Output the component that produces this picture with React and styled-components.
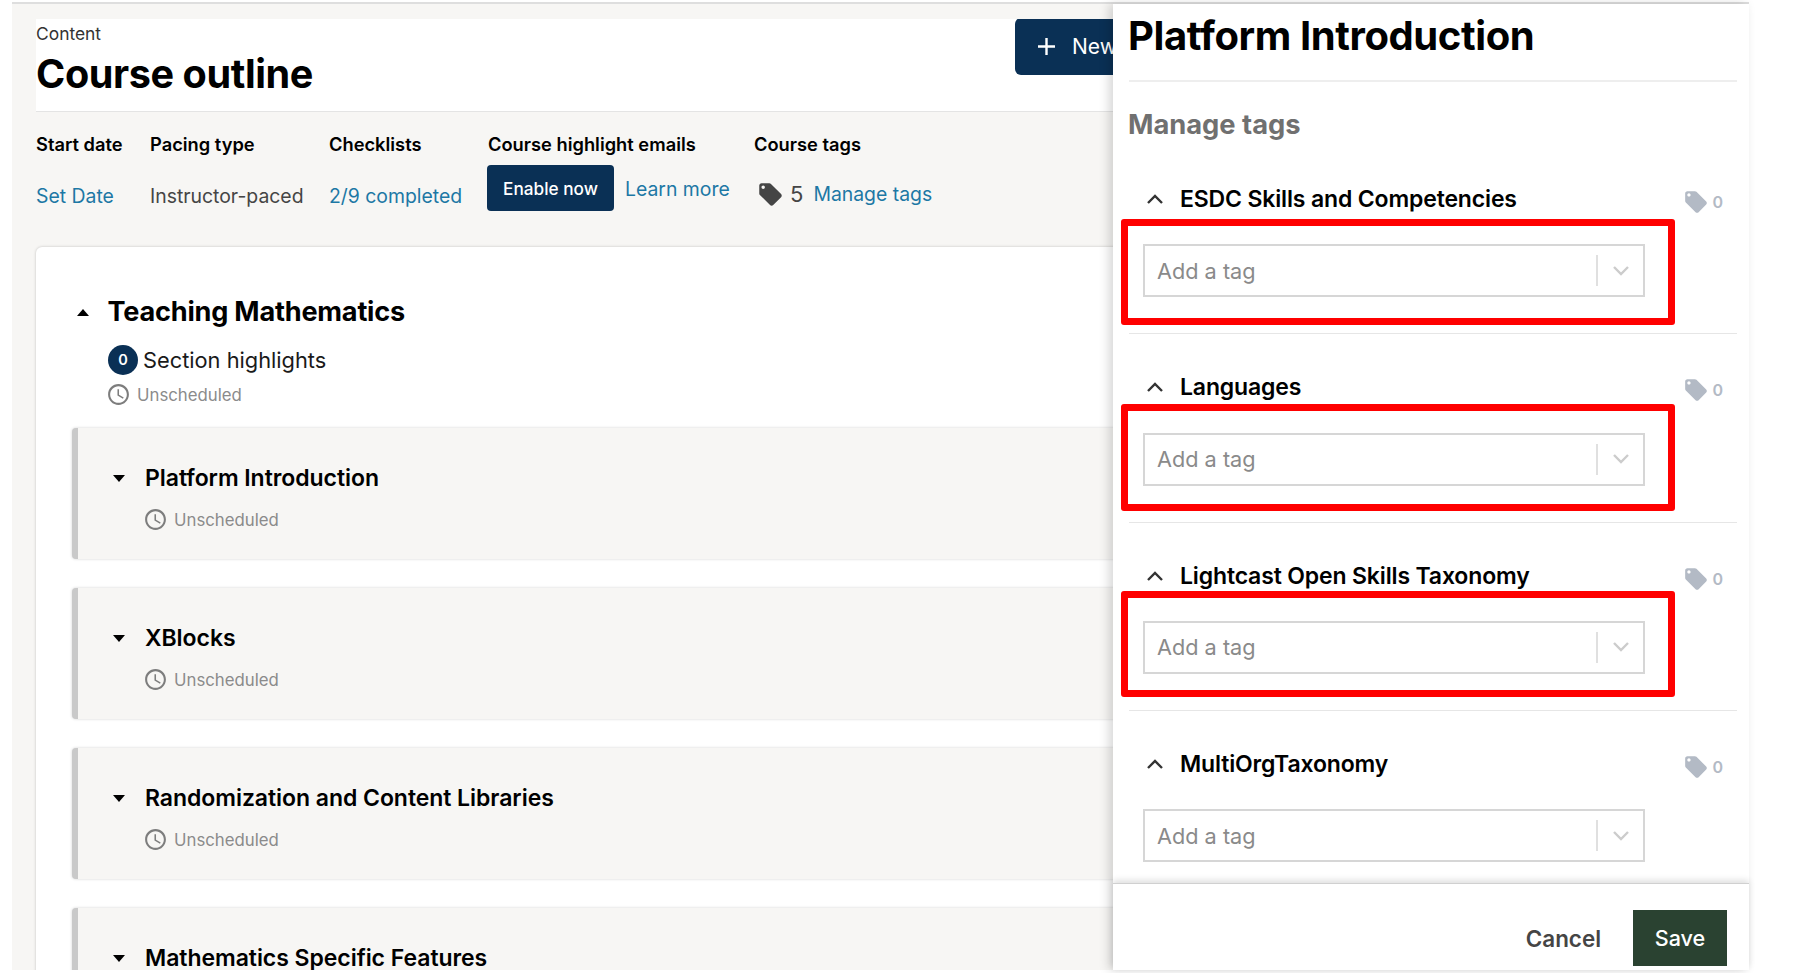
import React from 'react'
import styled, { createGlobalStyle } from 'styled-components'

const GlobalStyle = createGlobalStyle`
html, body {
  margin: 0;
  padding: 0;
  background: #fff;
  font-family: Inter, "Liberation Sans", sans-serif;
}
* { box-sizing: border-box; }
`

const Page = styled.div`
width: 1797px;
height: 973px;
padding: 2px 48px 3px 12px;
overflow: hidden;
background: #fff;
`

const Screen = styled.div`
display: flex;
height: 968px;
border-top: 2px solid #dedede;
background: #f7f6f4;
`

const Main = styled.main`
width: 1101px;
flex-shrink: 0;
padding: 15px 0 0 24px;
overflow: hidden;
`

const PageHeader = styled.header`
display: flex;
height: 93px;
width: 1077px;
background: #fff;
border-bottom: 1px solid #e4e4e4;
overflow: hidden;
`

const HeaderText = styled.div`
flex: 0 0 979px;
`

const Eyebrow = styled.div`
font-size: 17.4px;
line-height: 22px;
margin-top: 4px;
color: #333;
`

const PageTitle = styled.h1`
margin: 5px 0 0;
font-size: 39.6px;
line-height: 48px;
font-weight: 700;
letter-spacing: -0.4px;
color: #000;
`

const NewButton = styled.div`
display: flex;
align-items: center;
gap: 15px;
flex-shrink: 0;
height: 57px;
margin-top: -1px;
padding-left: 21px;
width: 190px;
background: #0a3055;
border-radius: 6px;
color: #fff;
font-size: 21px;
white-space: nowrap;
`

const MetaRow = styled.div`
display: flex;
margin-top: 20px;
`

const MetaColumn = styled.div`
flex: 0 0 ${(p) => p.$width}px;
`

const MetaLabel = styled.div`
font-size: 18.3px;
line-height: 24px;
font-weight: 600;
color: #000;
white-space: nowrap;
`

const MetaValue = styled.div`
display: flex;
align-items: center;
height: 46px;
margin-top: 9px;
padding-top: ${(p) => p.$offset || 0}px;
font-size: 19.4px;
color: #454545;
white-space: nowrap;
`

const TextLink = styled.span`
color: #1d78a5;
margin-top: ${(p) => p.$top || 0}px;
margin-left: ${(p) => p.$left || 0}px;
`

const DarkButton = styled.div`
display: flex;
align-items: center;
justify-content: center;
width: 127px;
height: 46px;
margin-left: -1px;
background: #0a3055;
border-radius: 4px;
color: #fff;
font-size: 17.2px;
font-weight: 500;
`

const TagCount = styled.span`
font-size: 22px;
margin: 0 10px 0 6px;
color: #454545;
`

const TagSlot = styled.span`
display: flex;
margin-left: 3px;
`

const OutlineCard = styled.section`
width: 1200px;
margin-top: 36px;
padding: 48px 0 0 36px;
background: #fff;
border-radius: 6px 0 0 0;
box-shadow: 0 0 3px rgba(0, 0, 0, 0.22);
min-height: 800px;
`

const SectionTitleRow = styled.div`
display: flex;
align-items: center;
gap: 18.5px;
margin-left: 5px;
`

const Caret = styled.span`
flex-shrink: 0;
width: 0;
height: 0;
border-left: ${(p) => p.$size}px solid transparent;
border-right: ${(p) => p.$size}px solid transparent;
${(p) => (p.$up ? 'border-bottom' : 'border-top')}: 7px solid #000;
`

const SectionTitle = styled.h2`
margin: 0;
font-size: 27.1px;
line-height: 34px;
font-weight: 700;
color: #000;
letter-spacing: -0.2px;
`

const SectionBody = styled.div`
margin-left: 36px;
`

const Highlights = styled.div`
display: flex;
align-items: center;
gap: 5px;
height: 31px;
margin-top: 15px;
font-size: 21.8px;
color: #1a1a1a;
`

const Badge = styled.span`
display: flex;
align-items: center;
justify-content: center;
width: 30px;
height: 30px;
border-radius: 50%;
background: #0a3055;
color: #fff;
font-size: 14.5px;
font-weight: 600;
`

const Schedule = styled.div`
display: flex;
align-items: center;
gap: 6px;
margin-top: ${(p) => p.$top}px;
margin-left: ${(p) => p.$left}px;
height: 25px;
font-size: 16.8px;
color: #8b8b8b;
`

const SubsectionList = styled.div`
display: flex;
flex-direction: column;
gap: 29px;
margin-top: 21px;
`

const Subsection = styled.article`
height: 131px;
padding: 38px 0 0 35px;
background: #f7f6f4;
border-left: 6px solid #c9c9c9;
border-radius: 4px;
box-shadow: 0 0 3px rgba(0, 0, 0, 0.18);
`

const SubsectionRow = styled.div`
display: flex;
align-items: center;
gap: 20px;
`

const SubsectionTitle = styled.h3`
margin: 0;
font-size: 23px;
line-height: 24px;
font-weight: 600;
color: #000;
letter-spacing: -0.05px;
white-space: nowrap;
`

const Panel = styled.aside`
display: flex;
flex-direction: column;
width: 636px;
flex-shrink: 0;
background: #fff;
box-shadow: -4px 0 10px rgba(0, 0, 0, 0.16);
position: relative;
`

const PanelBody = styled.div`
flex: 1;
min-height: 0;
padding: 8px 12px 0 16px;
overflow: hidden;
`

const PanelTitle = styled.h2`
margin: 0;
padding-bottom: 20px;
border-bottom: 2px solid #eeeeee;
font-size: 40px;
line-height: 48px;
font-weight: 700;
letter-spacing: -0.4px;
text-indent: -1px;
color: #000;
`

const PanelSubtitle = styled.h3`
margin: 25px 0 3px;
font-size: 27.3px;
line-height: 36px;
font-weight: 700;
text-indent: -1px;
color: #707070;
`

const TagSection = styled.section`
padding: 37px 0 36px;
border-bottom: 1px solid #e6e6e6;
&:last-child { border-bottom: none; }
`

const TagHeader = styled.div`
display: flex;
align-items: center;
height: 32px;
padding: 0 14px 0 18px;
`

const TagName = styled.h4`
flex: 1;
margin: 0 0 0 17px;
font-size: 23px;
line-height: 32px;
font-weight: 600;
color: #000;
letter-spacing: -0.15px;
`

const TagStat = styled.span`
display: flex;
align-items: center;
gap: 3px;
margin-top: 6px;
font-size: 16px;
font-weight: 600;
color: #b3bac5;
`

const Select = styled.div`
position: relative;
display: flex;
align-items: center;
width: 502px;
height: 53px;
margin: 29.3px 0 0 14px;
padding-left: 12px;
background: #fff;
border: 2px solid #d6d6d6;
font-size: 21.7px;
color: #8a8a8a;
`

const Placeholder = styled.span`
flex: 1;
`

const SelectDivider = styled.span`
width: 2px;
height: 31px;
background: #e0e0e0;
`

const SelectArrow = styled.span`
display: flex;
justify-content: center;
width: 45px;
`

const RedFrame = styled.span`
position: absolute;
top: ${(p) => p.$top}px;
bottom: ${(p) => p.$bottom}px;
left: -24px;
right: -32px;
border: 7px solid #ff0000;
border-radius: 3px;
pointer-events: none;
`

const PanelFooter = styled.footer`
display: flex;
justify-content: flex-end;
gap: 32px;
flex-shrink: 0;
height: 87px;
padding: 26px 22px 0 0;
background: #fff;
border-top: 1px solid #d0d0d0;
box-shadow: 0 -3px 6px rgba(0, 0, 0, 0.12);
position: relative;
`

const CancelButton = styled.div`
display: flex;
align-items: center;
height: 56px;
font-size: 22.4px;
font-weight: 600;
color: #454545;
`

const SaveButton = styled.div`
display: flex;
align-items: center;
justify-content: center;
width: 94px;
height: 56px;
background: #2a4231;
color: #fff;
font-size: 21.6px;
font-weight: 500;
`

const ClockIcon = ({ size = 25 }) => (
  <svg width={size} height={size} viewBox="0 0 24 24" fill="#7d7d7d">
    <path d="M11.99 2C6.47 2 2 6.48 2 12s4.47 10 9.99 10C17.52 22 22 17.52 22 12S17.52 2 11.99 2zM12 20c-4.42 0-8-3.58-8-8s3.58-8 8-8 8 3.58 8 8-3.58 8-8 8zm.5-13H11v6l5.25 3.15.75-1.23-4.5-2.67z" />
  </svg>
)

const TagIcon = ({ size, color }) => (
  <svg width={size} height={size} viewBox="0 0 24 24" fill={color}>
    <path d="M21.41 11.58l-9-9C12.05 2.22 11.55 2 11 2H4c-1.1 0-2 .9-2 2v7c0 .55.22 1.06.59 1.42l9 9c.36.36.86.58 1.41.58.55 0 1.05-.22 1.41-.59l7-7c.37-.36.59-.86.59-1.41 0-.55-.23-1.06-.59-1.42zM5.5 7C4.67 7 4 6.33 4 5.5S4.67 4 5.5 4 7 4.67 7 5.5 6.33 7 5.5 7z" />
  </svg>
)

const PlusIcon = () => (
  <svg width="21" height="21" viewBox="0 0 21 21" stroke="#fff" strokeWidth="2.4" fill="none">
    <path d="M10.5 2v17M2 10.5h17" />
  </svg>
)

const ChevronUp = () => (
  <svg width="16" height="10" viewBox="0 0 16 10" fill="none" stroke="#333" strokeWidth="2.4">
    <path d="M1 9l7-7 7 7" />
  </svg>
)

const ChevronDown = () => (
  <svg width="16" height="10" viewBox="0 0 16 10" fill="none" stroke="#cccccc" strokeWidth="2.4">
    <path d="M1 1l7 7 7-7" />
  </svg>
)

const subsections = [
  { title: 'Platform Introduction', scheduled: true },
  { title: 'XBlocks', scheduled: true },
  { title: 'Randomization and Content Libraries', scheduled: true },
  { title: 'Mathematics Specific Features', scheduled: false },
]

const taxonomies = [
  { name: 'ESDC Skills and Competencies', frame: { top: -27, bottom: -30 } },
  { name: 'Languages', frame: { top: -31, bottom: -27 } },
  { name: 'Lightcast Open Skills Taxonomy', frame: { top: -32, bottom: -25 } },
  { name: 'MultiOrgTaxonomy' },
]

const App = () => {
  return (
    <Page>
      <GlobalStyle />
      <Screen>
        <Main>
          <PageHeader>
            <HeaderText>
              <Eyebrow>Content</Eyebrow>
              <PageTitle>Course outline</PageTitle>
            </HeaderText>
            <NewButton>
              <PlusIcon />
              New
            </NewButton>
          </PageHeader>

          <MetaRow>
            <MetaColumn $width={114}>
              <MetaLabel>Start date</MetaLabel>
              <MetaValue $offset={16}>
                <TextLink>Set Date</TextLink>
              </MetaValue>
            </MetaColumn>
            <MetaColumn $width={179}>
              <MetaLabel>Pacing type</MetaLabel>
              <MetaValue $offset={16}>Instructor-paced</MetaValue>
            </MetaColumn>
            <MetaColumn $width={159}>
              <MetaLabel>Checklists</MetaLabel>
              <MetaValue $offset={16}>
                <TextLink>2/9 completed</TextLink>
              </MetaValue>
            </MetaColumn>
            <MetaColumn $width={266}>
              <MetaLabel>Course highlight emails</MetaLabel>
              <MetaValue>
                <DarkButton>Enable now</DarkButton>
                <TextLink $left={11} $top={1}>Learn more</TextLink>
              </MetaValue>
            </MetaColumn>
            <MetaColumn $width={260}>
              <MetaLabel>Course tags</MetaLabel>
              <MetaValue $offset={12}>
                <TagSlot>
                  <TagIcon size={27} color="#454545" />
                </TagSlot>
                <TagCount>5</TagCount>
                <TextLink>Manage tags</TextLink>
              </MetaValue>
            </MetaColumn>
          </MetaRow>

          <OutlineCard>
            <SectionTitleRow>
              <Caret $up $size={6} />
              <SectionTitle>Teaching Mathematics</SectionTitle>
            </SectionTitleRow>
            <SectionBody>
              <Highlights>
                <Badge>0</Badge>
                Section highlights
              </Highlights>
              <Schedule $top={7} $left={-2}>
                <ClockIcon />
                Unscheduled
              </Schedule>
            </SectionBody>
            <SubsectionList>
              {subsections.map((item) => (
                <Subsection key={item.title}>
                  <SubsectionRow>
                    <Caret $size={6.5} />
                    <SubsectionTitle>{item.title}</SubsectionTitle>
                  </SubsectionRow>
                  {item.scheduled && (
                    <Schedule $top={17} $left={30}>
                      <ClockIcon />
                      Unscheduled
                    </Schedule>
                  )}
                </Subsection>
              ))}
            </SubsectionList>
          </OutlineCard>
        </Main>

        <Panel>
          <PanelBody>
            <PanelTitle>Platform Introduction</PanelTitle>
            <PanelSubtitle>Manage tags</PanelSubtitle>
            {taxonomies.map((item) => (
              <TagSection key={item.name}>
                <TagHeader>
                  <ChevronUp />
                  <TagName>{item.name}</TagName>
                  <TagStat>
                    <TagIcon size={26} color="#b3bac5" />
                    0
                  </TagStat>
                </TagHeader>
                <Select>
                  <Placeholder>Add a tag</Placeholder>
                  <SelectDivider />
                  <SelectArrow>
                    <ChevronDown />
                  </SelectArrow>
                  {item.frame && <RedFrame $top={item.frame.top} $bottom={item.frame.bottom} />}
                </Select>
              </TagSection>
            ))}
          </PanelBody>
          <PanelFooter>
            <CancelButton>Cancel</CancelButton>
            <SaveButton>Save</SaveButton>
          </PanelFooter>
        </Panel>
      </Screen>
    </Page>
  )
}

export default App
